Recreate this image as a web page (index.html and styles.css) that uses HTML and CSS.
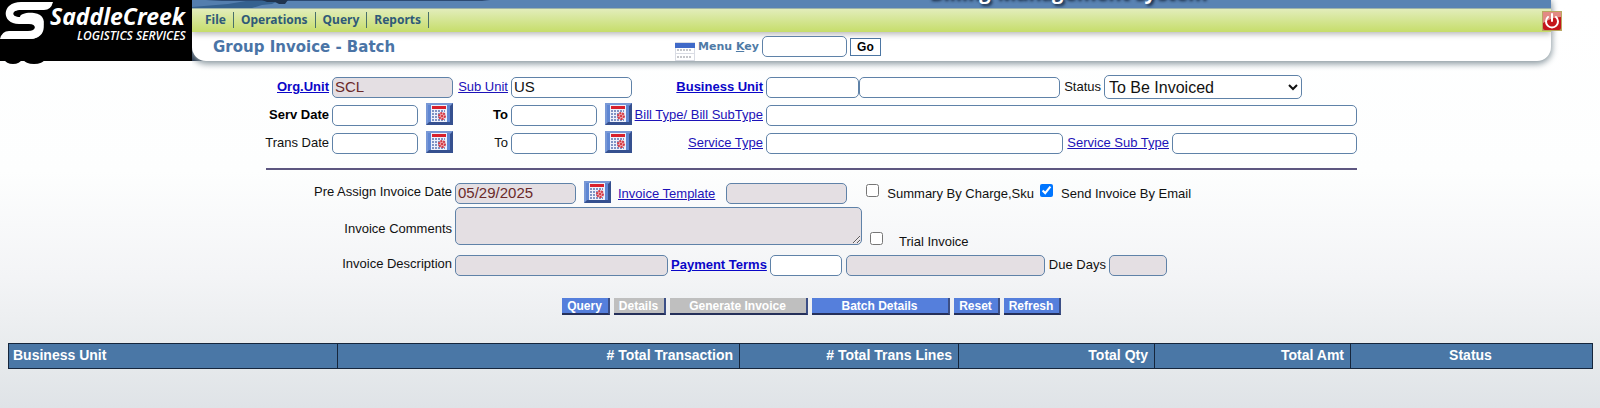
FILE: index.html
```
<!DOCTYPE html>
<html lang="en">
<head>
<meta charset="utf-8">
<title>Group Invoice - Batch</title>
<link rel="stylesheet" href="styles.css">
</head>
<body>
<svg class="defs" aria-hidden="true">
  <symbol id="calendar" viewBox="0 0 27 22">
    <rect width="27" height="22" fill="#35508f"/>
    <path d="M0 0H27L24 3H3V19L0 22Z" fill="#7898d6"/>
    <rect x="2" y="2" width="22" height="17" fill="#5f87d3"/>
    <rect x="5" y="2" width="16" height="17" fill="#eef1fb"/>
    <rect x="6" y="3" width="14" height="3" fill="#d8202c"/>
    <path d="M6 8h13M6 11h13M6 14h13M6 17h13" stroke="#7f93c4" stroke-width="2" stroke-dasharray="2 1"/>
    <circle cx="16" cy="13" r="3" fill="#f0a0a4" stroke="#d43b48" stroke-width="2" stroke-dasharray="2 1"/>
    <circle cx="16" cy="13" r="1" fill="#c8202c"/>
  </symbol>
</svg>

<header class="header">
  <div class="logo">
    <svg class="logo-art" viewBox="0 0 192 66" role="img" aria-label="Saddle Creek Logistics Services">
      <ellipse cx="13" cy="60" rx="8" ry="4"/>
      <ellipse cx="34" cy="60" rx="10" ry="4"/>
      <rect width="192" height="61"/>
      <path d="M21 2H53Q51 10 44 10H21C11 10 11 17 20 17H32C48 17 48 39 30 39H0Q2 31 9 31H28C37 31 37 24 29 24H19C1 24 1 2 21 2Z" fill="#fff"/>
      <path d="M34 13C44 14 46 22 42 31C40 36 36 39 30 39C42 33 40 18 30 17H20C20 14 27 12 34 13Z" fill="#fff"/>
      <text class="logo-name" x="50" y="25">SaddleCreek</text>
      <text class="logo-sub" x="77" y="40">LOGISTICS SERVICES</text>
    </svg>
  </div>
  <div class="panel">
    <div class="banner">
      <svg class="banner-art" viewBox="0 0 300 8" aria-hidden="true">
        <path d="M0 0H88L80 4L70 5L60 8H0Z" fill="#35618f"/>
        <path d="M0 0H60L36 4L0 7Z" fill="#547eae"/>
        <path d="M14 0H298L290 1H30Z" fill="#2c4a73"/>
        <path d="M70 0h26l-3 4h-6l-4-2h-8z" fill="#20344f"/>
      </svg>
      <span class="system">Billing Management System</span>
    </div>
    <div class="menubar">
      <nav class="menu">
        <a href="#">File</a><a href="#">Operations</a><a href="#">Query</a><a href="#">Reports</a>
      </nav>
      <button class="power" type="button" aria-label="Log out">
        <svg viewBox="0 0 20 20" width="20" height="20">
          <rect width="20" height="20" fill="#b9a862"/>
          <rect x="1" y="1" width="18" height="18" rx="2" fill="#c4161c"/>
          <path d="M1 1H19V6Q10 6 1 12Z" fill="#e28a84"/>
          <path d="M6 6a6 6 0 1 0 8 0M10 3V10" fill="none" stroke="#fff" stroke-width="2" stroke-linecap="round"/>
        </svg>
      </button>
    </div>
    <div class="titlebar">
      <h1>Group Invoice - Batch</h1>
      <div class="menukey">
        <svg viewBox="0 0 20 19" width="20" height="19" aria-hidden="true">
          <rect width="20" height="19" fill="#d9dce4"/>
          <rect x="1" y="6" width="18" height="5" fill="#fff"/><rect x="1" y="12" width="18" height="6" fill="#fff"/>
          <rect y="1" width="20" height="5" fill="#3f69c8"/>
          <path d="M2 8h14M2 15h14" stroke="#8a8d96" stroke-dasharray="2 1"/>
        </svg>
        <label for="key">Menu <u>K</u>ey</label>
        <input class="field" id="key" type="text">
        <button class="go" type="button">Go</button>
      </div>
    </div>
  </div>
</header>

<main>
  <form class="form">
    <div class="criteria">
      <label class="lab" for="org"><a class="strong" href="#">Org.Unit</a></label>
      <input class="field readonly" id="org" value="SCL" readonly>
      <label class="lab" for="sub"><a href="#">Sub Unit</a></label>
      <input class="field" id="sub" value="US">
      <label class="lab" for="bu"><a class="strong" href="#">Business Unit</a></label>
      <div class="line">
        <input class="field bu-code" id="bu"><input class="field grow" aria-label="Business unit name">
        <label class="status-label" for="status">Status</label>
        <select class="field status" id="status"><option>To Be Invoiced</option></select>
      </div>

      <label class="lab strong" for="sd1">Serv Date</label>
      <div class="date"><input class="field" id="sd1"><button class="cal" type="button" aria-label="Pick date"><svg><use href="#calendar"/></svg></button></div>
      <label class="lab strong" for="sd2">To</label>
      <div class="date"><input class="field" id="sd2"><button class="cal" type="button" aria-label="Pick date"><svg><use href="#calendar"/></svg></button></div>
      <label class="lab" for="bt"><a href="#">Bill Type/ Bill SubType</a></label>
      <div class="line"><input class="field grow" id="bt"></div>

      <label class="lab" for="td1">Trans Date</label>
      <div class="date"><input class="field" id="td1"><button class="cal" type="button" aria-label="Pick date"><svg><use href="#calendar"/></svg></button></div>
      <label class="lab" for="td2">To</label>
      <div class="date"><input class="field" id="td2"><button class="cal" type="button" aria-label="Pick date"><svg><use href="#calendar"/></svg></button></div>
      <label class="lab" for="st"><a href="#">Service Type</a></label>
      <div class="line">
        <input class="field grow" id="st">
        <label class="sst-label" for="sst"><a href="#">Service Sub Type</a></label>
        <input class="field sst" id="sst">
      </div>
    </div>

    <hr class="rule">

    <div class="invoice">
      <label class="lab" for="pre">Pre Assign Invoice Date</label>
      <div class="line">
        <input class="field readonly pre" id="pre" value="05/29/2025" readonly>
        <button class="cal" type="button" aria-label="Pick date"><svg><use href="#calendar"/></svg></button>
        <label class="tpl-label" for="tpl"><a href="#">Invoice Template</a></label>
        <input class="field readonly tpl" id="tpl" readonly>
        <label class="check sum"><input type="checkbox"><span>Summary By Charge,Sku</span></label>
        <label class="check mail"><input type="checkbox" checked><span>Send Invoice By Email</span></label>
      </div>

      <label class="lab com-label" for="com">Invoice Comments</label>
      <div class="line comments">
        <textarea class="field readonly" id="com" readonly></textarea>
        <label class="check trial"><input type="checkbox"><span>Trial Invoice</span></label>
      </div>

      <label class="lab" for="desc">Invoice Description</label>
      <div class="line last">
        <input class="field readonly desc" id="desc" readonly>
        <label class="pt-label" for="pt"><a class="strong" href="#">Payment Terms</a></label>
        <input class="field pt" id="pt">
        <input class="field readonly pt-name" aria-label="Payment terms description" readonly>
        <label class="due-label" for="due">Due Days</label>
        <input class="field readonly due" id="due" readonly>
      </div>
    </div>
  </form>

  <div class="actions">
    <button class="btn query" type="button">Query</button>
    <button class="btn details" type="button" disabled>Details</button>
    <button class="btn wide" type="button" disabled>Generate Invoice</button>
    <button class="btn wide" type="button">Batch Details</button>
    <button class="btn reset" type="button">Reset</button>
    <button class="btn refresh" type="button">Refresh</button>
  </div>

  <table class="results">
    <colgroup><col class="c1"><col class="c2"><col class="c3"><col class="c4"><col class="c5"><col></colgroup>
    <thead>
      <tr><th class="left">Business Unit</th><th># Total Transaction</th><th># Total Trans Lines</th><th>Total Qty</th><th>Total Amt</th><th class="center">Status</th></tr>
    </thead>
  </table>
</main>
</body>
</html>
```
FILE: styles.css
```
* { box-sizing: border-box; }
html { min-height: 100%; background: linear-gradient(#fff 0, #fdfefe 42%, #f3f4f6 68%, #e8ebed 86%, #dfe3e7 100%); }
body {
  margin: 0;
  font: 13px/16px "Liberation Sans", Arial, sans-serif;
  color: #111;
}
.defs { position: absolute; width: 0; height: 0; }
a { color: #1c12b8; }
.strong { font-weight: bold; color: #000; }
a.strong { color: #0a06c8; }

/* Header */
.header { display: flex; height: 61px; padding-right: 49px; }
.logo {
  flex: none;
  width: 192px;
  height: 61px;
  background: #000;
  box-shadow: 14px 0 0 #1c2c44;
}
.logo-art { display: block; width: 192px; height: 66px; }
.logo-name { font: italic bold 23px "Noto Sans", "Open Sans", sans-serif; fill: #fff; }
.logo-sub { font: italic 600 12px "Open Sans", "Noto Sans", sans-serif; fill: #fff; }
.panel {
  flex: 1;
  display: flex;
  flex-direction: column;
  background: #fff;
  border-radius: 0 0 14px 14px;
  box-shadow: 0 2px 6px 1px #8d9ba2;
  clip-path: inset(0 -12px -12px 0);
}
.banner { position: relative; height: 8px; overflow: hidden; background: #5983b3; }
.banner-art { display: block; width: 300px; height: 8px; }
.system {
  position: absolute;
  right: 345px;
  bottom: 4px;
  font: bold 20px/24px "Open Sans", sans-serif;
  white-space: nowrap;
  color: #fff;
  text-shadow: 2px 2px 3px #14253c;
}
.menubar {
  display: flex;
  align-items: center;
  justify-content: space-between;
  height: 24px;
  border-top: 1px solid #9fb3a8;
  background: linear-gradient(#e2edbb, #c6dd6a);
  box-shadow: 0 2px 6px #b5b5b5;
}
.menu { display: flex; padding: 0 0 2px 6px; }
.menu a {
  padding: 0 7px;
  border-right: 1px solid #49706a;
  font: bold 12px/16px "Noto Sans", Verdana, sans-serif;
  color: #2f5a78;
  text-decoration: none;
}
.power { flex: none; width: 20px; height: 20px; margin-right: -11px; padding: 0; border: 0; background: none; }
.power svg { display: block; }
.titlebar { flex: 1; display: flex; align-items: center; padding-left: 21px; }
h1 {
  width: 462px;
  margin: 0;
  font: bold 15px/24px "DejaVu Sans", Verdana, sans-serif;
  color: #4a74a6;
}
.menukey { display: flex; align-items: center; gap: 3px; }
.menukey svg { margin-top: 9px; }
.menukey label { font: bold 11px/16px "DejaVu Sans", Verdana, sans-serif; color: #4f7ba6; }
.menukey .field { width: 85px; }
.go {
  width: 31px;
  height: 18px;
  padding: 0;
  border: 1px solid #4c76a3;
  background: #fff;
  font: bold 12px/14px "Liberation Sans", Arial, sans-serif;
  color: #000;
}

/* Form */
.form { padding: 12px 243px 0 266px; }
.criteria { display: grid; grid-template-columns: 62px 121px 52px 121px 128px minmax(0, 1fr); column-gap: 3px; padding-left: 1px; }
.criteria > *, .invoice > * { min-height: 28px; align-content: center; }
.criteria > .field { min-height: 0; align-self: center; }
.lab { display: flex; align-items: center; justify-content: flex-end; white-space: nowrap; }
.invoice .lab { padding-bottom: 2px; }
.invoice .com-label { padding: 6px 0 0; }
.line, .date { display: flex; align-items: center; white-space: nowrap; }
.date { justify-content: space-between; }
.field {
  min-width: 0;
  height: 21px;
  padding: 0 2px 2px;
  border: 1px solid #5f82a8;
  border-radius: 5px;
  background: #fff;
  font: 15px/18px "Liberation Sans", Arial, sans-serif;
  color: #111;
}
.readonly { background: #e4dfe3; color: #6b2a2a; }
.date .field { width: 86px; }
.cal { width: 27px; height: 22px; padding: 0; border: 0; background: none; }
.cal svg { display: block; width: 27px; height: 22px; }
.date .cal { margin-bottom: 3px; }
.grow { flex: 1; }
.bu-code { width: 93px; }
.status-label { margin: 0 3px 0 4px; }
.status { width: 198px; height: 24px; margin-right: 55px; padding: 0; font-size: 16px; }
.sst-label { margin: 0 3px 0 4px; }
.sst { width: 185px; }
.rule { height: 2px; margin: 11px 0 9px; border: 0; background: #5d5680; }
.invoice { display: grid; grid-template-columns: 186px minmax(0, 1fr); column-gap: 3px; }
.pre { width: 121px; margin-right: 8px; }
.invoice .cal { margin-bottom: 3px; }
.tpl-label { margin: 2px 11px 0 7px; }
.tpl { width: 121px; }
.check { display: flex; align-items: center; }
.check input { width: 13px; height: 13px; margin: 0 8px 6px 0; }
.sum { margin-left: 19px; }
.mail { margin-left: 6px; }
.check span { padding-top: 1px; }
.comments { align-items: flex-end; }
textarea.field { display: block; width: 407px; height: 38px; }
.trial { margin-left: 8px; margin-bottom: -6px; }
.trial input { margin-right: 16px; }
.invoice > .last { min-height: 40px; }
.desc { width: 213px; }
.pt-label { margin: 0 3px; }
.pt { width: 72px; margin-right: 4px; }
.pt-name { width: 199px; }
.due-label { margin: 0 3px 0 4px; }
.due { width: 58px; }

/* Buttons */
.actions { display: flex; justify-content: center; gap: 4px; padding: 13px 0 0 22px; }
.btn {
  height: 17px;
  padding: 0;
  border: solid;
  border-width: 0 2px 2px 0;
  border-color: #000 #3c4f86 #25305a #000;
  background: #557fdc;
  font: bold 12px/14px "Liberation Sans", Arial, sans-serif;
  color: #fff;
}
.btn:disabled { background: #bfbfbf; }
.query { width: 48px; }
.details { width: 52px; }
.wide { width: 138px; }
.reset { width: 46px; }
.refresh { width: 57px; }

/* Results */
.results { width: calc(100% - 15px); margin: 28px 7px 0 8px; table-layout: fixed; border-collapse: collapse; }
.results th {
  height: 25px;
  padding: 0 6px 3px 4px;
  border: 1px solid #16263c;
  background: #4a77a6;
  font: bold 14px/20px "Liberation Sans", Arial, sans-serif;
  text-align: right;
  color: #fff;
}
.results .left { text-align: left; }
.results .center { text-align: center; }
.c1 { width: 329px; }
.c2 { width: 402px; }
.c3 { width: 219px; }
.c4 { width: 196px; }
.c5 { width: 196px; }
```
